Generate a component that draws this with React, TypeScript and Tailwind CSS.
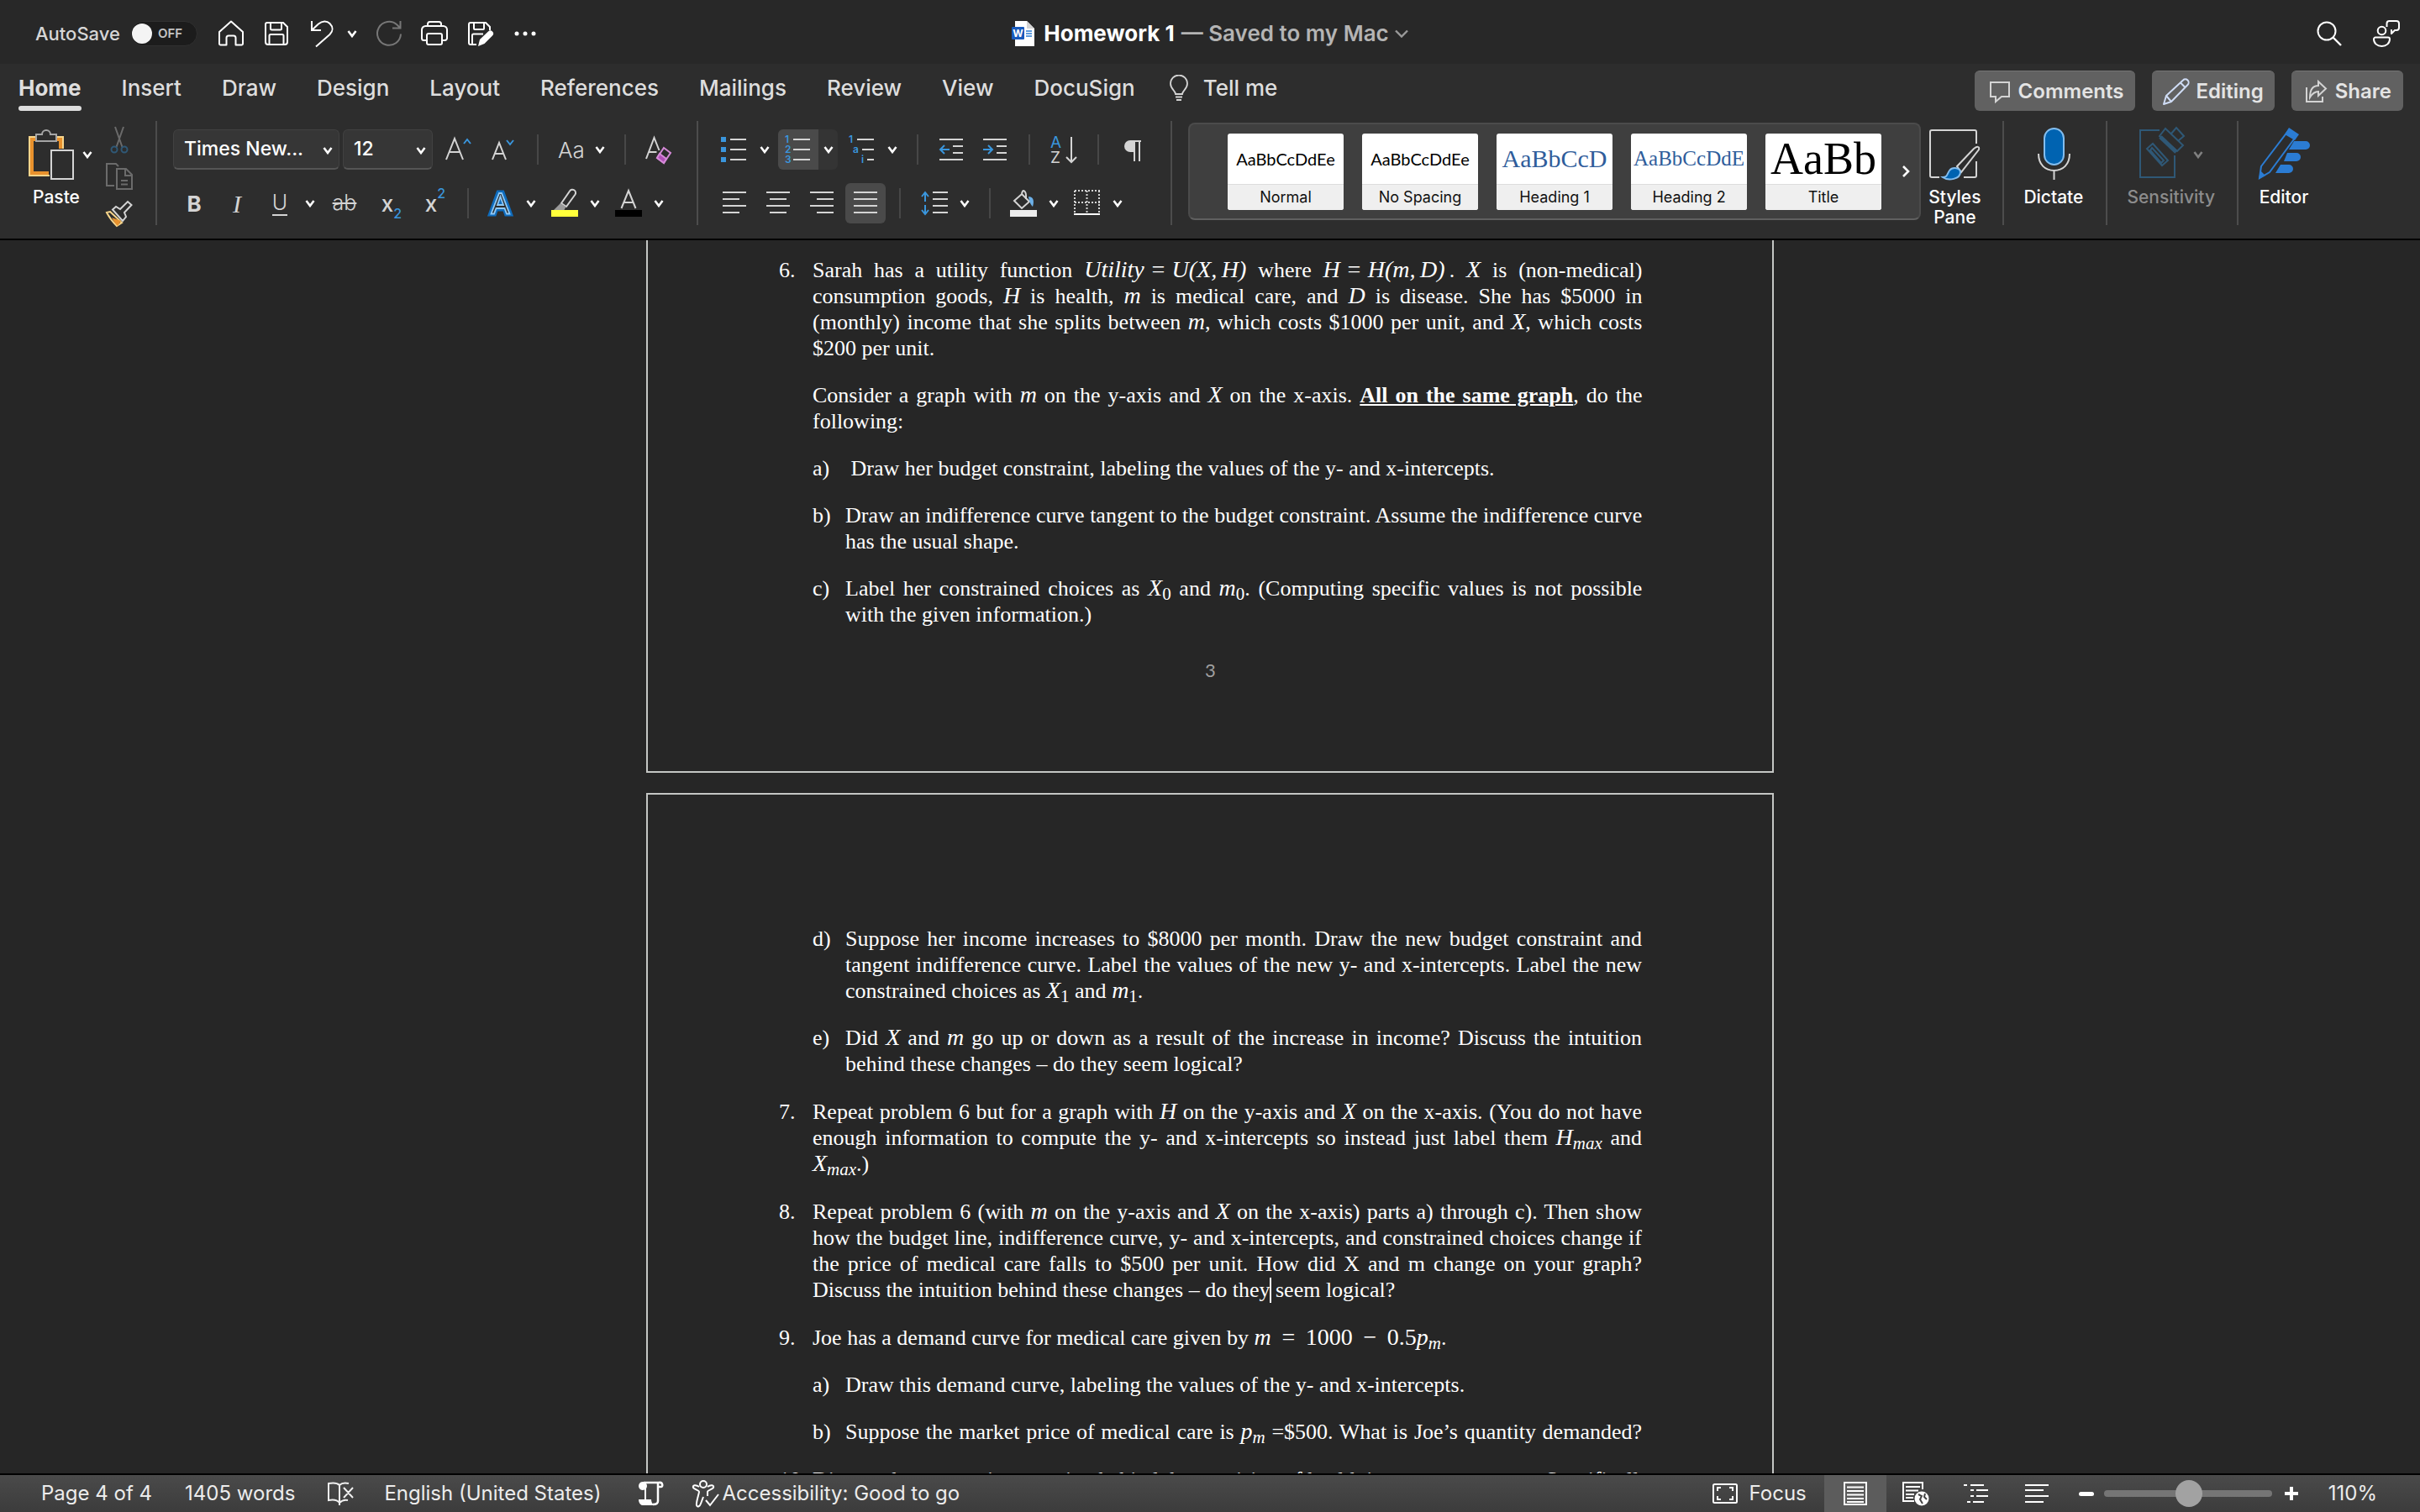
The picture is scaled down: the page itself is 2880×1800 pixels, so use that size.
import type { ReactNode } from "react";
import clsx from "clsx";

const BLUE = "#3a96dd";
const GREY = "#d4d4d4";
const DIM = "#6b6b6b";

function Icon({ children, size = 32, label }: { children: ReactNode; size?: number; label?: string }) {
  return (
    <svg
      width={size}
      height={size}
      viewBox={`0 0 ${size} ${size}`}
      fill="none"
      stroke={GREY}
      strokeWidth="2"
      className="shrink-0 overflow-visible"
      aria-label={label}
    >
      {children}
    </svg>
  );
}

function Chevron({ className = "text-white" }: { className?: string }) {
  return (
    <svg width="12" height="10" viewBox="0 0 12 10" fill="none" className={clsx("shrink-0", className)}>
      <path d="M1.5 2 6 8l4.5-6" stroke="currentColor" strokeWidth="2.6" />
    </svg>
  );
}

function Tool({ label, children, className }: { label: string; children: ReactNode; className?: string }) {
  return (
    <button aria-label={label} className={clsx("flex h-12 w-8 shrink-0 items-center justify-center", className)}>
      {children}
    </button>
  );
}

function Split({ label, children }: { label: string; children: ReactNode }) {
  return (
    <div className="flex shrink-0 items-center gap-[14px]">
      <Tool label={label}>{children}</Tool>
      <button aria-label={`${label} options`}>
        <Chevron />
      </button>
    </div>
  );
}

function Rule({ className = "mx-6" }: { className?: string }) {
  return <div className={clsx("h-9 w-[2px] shrink-0 bg-[#474747]", className)} />;
}

function GroupRule({ className }: { className?: string }) {
  return <div className={clsx("h-[124px] w-[2px] shrink-0 bg-[#4c4c4c]", className)} />;
}

/* ---------- title bar ---------- */

function TitleBar() {
  return (
    <header className="grid h-[76px] shrink-0 grid-cols-[1fr_auto_1fr] items-center bg-[#282828] pt-1">
      <div className="flex items-center pl-[42px]">
        <label className="flex items-center gap-3 text-[22px] font-medium text-[#d6d6d6]">
          AutoSave
          <span className="relative flex h-[30px] w-20 items-center">
            <input
              type="checkbox"
              className="absolute inset-0 appearance-none rounded-full border border-[#303030] bg-[#1c1c1c]"
            />
            <span className="relative ml-[2px] size-6 rounded-full bg-[#f4f4f4]" />
            <span className="relative ml-[7px] text-[15px] font-semibold text-[#c4c4c4]">OFF</span>
          </span>
        </label>
        <div className="ml-6 flex items-center gap-[22px]">
          <button aria-label="Home">
            <Icon>
              <path d="M2 14 16 1.5 30 14v14a1.5 1.5 0 0 1-1.500 1.500H21.500V21a2.500 2.500 0 0 0-2.500-2.500h-6A2.500 2.500 0 0 0 10.500 21v8.500H3.500A1.500 1.500 0 0 1 2 28z" stroke="#fff" strokeLinejoin="round" />
            </Icon>
          </button>
          <button aria-label="Save">
            <Icon>
              <path d="M5 3h19l5 5v18a3 3 0 0 1-3 3H6a3 3 0 0 1-3-3V5a2 2 0 0 1 2-2zM9 3v7a1.500 1.500 0 0 0 1.500 1.500h10A1.500 1.500 0 0 0 22 10V3M7.500 29V18.500A1.500 1.500 0 0 1 9 17h14a1.500 1.500 0 0 1 1.500 1.500V29" stroke="#fff" />
            </Icon>
          </button>
          <div className="flex items-center gap-[14px]">
            <button aria-label="Undo">
              <Icon>
                <path d="M4 1v11h11M4 12 12 4.500C16.500.5 22 .5 25.500 4c4 4 4 9 0 13L9 31.500" stroke="#fff" />
              </Icon>
            </button>
            <button aria-label="Undo options">
              <Chevron />
            </button>
          </div>
          <button aria-label="Redo">
            <Icon>
              <path d="M30 16.500a14 14 0 1 1-4.500-11L29 9M29.500 1v8.500H20" stroke="#777" />
            </Icon>
          </button>
          <button aria-label="Print">
            <Icon>
              <path d="M7 24H3.500A2.500 2.500 0 0 1 1 21.500V11.500A4.500 4.500 0 0 1 5.500 7h21a4.500 4.500 0 0 1 4.500 4.500v10a2.500 2.500 0 0 1-2.500 2.500H25M8 7V4.500A2.500 2.500 0 0 1 10.500 2h11A2.500 2.500 0 0 1 24 4.500V7M9 16h14a2 2 0 0 1 2 2v9a2 2 0 0 1-2 2H9a2 2 0 0 1-2-2v-9a2 2 0 0 1 2-2z" stroke="#fff" />
            </Icon>
          </button>
          <button aria-label="Save as">
            <Icon>
              <path d="M12 29H5a2 2 0 0 1-2-2V5a2 2 0 0 1 2-2h18l5 5v4M9 3v7a1 1 0 0 0 1 1h10a1 1 0 0 0 1-1V3M7 29V18a1.500 1.500 0 0 1 1.500-1.500H20" stroke="#fff" />
              <path d="m14 31 2-8L26 13.500a3.500 3.500 0 0 1 5 5L21.500 28z" fill="#fff" stroke="none" />
            </Icon>
          </button>
          <button aria-label="More">
            <Icon>
              <g fill="#fff" stroke="none">
                <circle cx="6" cy="16" r="2.500" />
                <circle cx="16" cy="16" r="2.500" />
                <circle cx="26" cy="16" r="2.500" />
              </g>
            </Icon>
          </button>
        </div>
      </div>

      <button className="flex items-center text-[26px] leading-8">
        <svg width="28" height="30" viewBox="0 0 28 30" className="mr-[10px]" aria-hidden>
          <path d="M4 0h14l9 9v21H4z" fill="#fff" />
          <path d="M18 0v9h9z" fill="#d3d3d3" />
          <rect x="0" y="7" width="15" height="15" rx="1" fill="#185abd" />
          <path d="M17 12h7M17 15h7M17 18h7" stroke="#2b7cd3" strokeWidth="1.500" />
          <text x="7.500" y="19" fontSize="12" fontWeight="700" fill="#fff" textAnchor="middle">W</text>
        </svg>
        <span className="font-bold text-white">Homework 1</span>
        <span className="ml-2 mr-[7px] font-semibold text-[#b4b4b4]">— Saved to my Mac</span>
        <svg width="16" height="10" viewBox="0 0 16 10" fill="none" aria-hidden>
          <path d="m1 1.500 7 7 7-7" stroke="#9a9a9a" strokeWidth="2.400" />
        </svg>
      </button>

      <div className="flex items-center justify-end gap-9 pr-6">
        <button aria-label="Search">
          <Icon>
            <circle cx="13" cy="13" r="10.500" stroke="#fff" />
            <path d="m20.500 20.500 9.500 9.500" stroke="#fff" strokeWidth="2.400" />
          </Icon>
        </button>
        <button aria-label="Account">
          <Icon>
            <circle cx="10.500" cy="12.500" r="4.800" stroke="#fff" />
            <path d="M3 20.500h15a2 2 0 0 1 2 2c0 5-4 8.500-9.500 8.500S1 27.500 1 22.500a2 2 0 0 1 2-2zM19 1h9a3 3 0 0 1 3 3v5a3 3 0 0 1-3 3h-2l-4 4v-4h-1" stroke="#fff" strokeLinejoin="round" />
            <path d="M16.500 8V4A3 3 0 0 1 19.500 1" stroke="#fff" />
          </Icon>
        </button>
      </div>
    </header>
  );
}

/* ---------- tabs ---------- */

const tabs = ["Home", "Insert", "Draw", "Design", "Layout", "References", "Mailings", "Review", "View", "DocuSign"];

function TabRow() {
  return (
    <div className="flex h-[68px] items-start pl-[22px] pr-5 pt-2">
      <nav className="flex gap-12">
        {tabs.map((t) => (
          <button key={t} className="flex h-12 flex-col justify-between text-[26px]">
            <span className={clsx("leading-[42px] text-[#dedede]", t === "Home" ? "font-bold" : "font-medium")}>{t}</span>
            {t === "Home" ? <span className="h-[6px] w-full rounded-full bg-[#dedede]" /> : null}
          </button>
        ))}
      </nav>
      <button className="ml-10 flex items-center gap-[17px] text-[26px] font-medium leading-[42px] text-[#dedede]">
        <svg width="24" height="32" viewBox="0 0 24 32" fill="none" stroke={GREY} strokeWidth="1.800" aria-hidden>
          <path d="M8 23c0-4-6-6-6-12.500a10 10 0 0 1 20 0C22 17 16 19 16 23zM8 26.500h8M9 30h6" />
        </svg>
        Tell me
      </button>
      <div className="ml-auto flex gap-5 text-[24px] font-semibold text-[#e4e4e4]">
        <button className="flex h-12 items-center gap-[6px] rounded-md border-t border-[#747474] bg-[#616161] px-[14px]">
          <Icon>
            <path d="M5 5h22v17h-9l-7 6v-6H5z" />
          </Icon>
          Comments
        </button>
        <button className="flex h-12 items-center gap-[7px] rounded-md border-t border-[#747474] bg-[#616161] px-[13px]">
          <Icon>
            <path d="m1 31 3-10L24 2.500a3.500 3.500 0 0 1 5.500 5.500L10 28zM4 21l6 7M21 5.500l6 6" stroke="#cfdcf5" strokeLinejoin="round" />
          </Icon>
          Editing
        </button>
        <button className="flex h-12 items-center gap-[6px] rounded-md border-t border-[#747474] bg-[#616161] px-[14px]">
          <Icon>
            <path d="M4 11v17h19v-6M18 4v5C11 9 8 15 8 23c3-5 6-7 10-7v5l9-8.500z" />
          </Icon>
          Share
        </button>
      </div>
    </div>
  );
}

/* ---------- ribbon ---------- */

function Clipboard() {
  return (
    <div className="flex pl-[34px]">
      <div className="flex flex-col pt-[10px]">
        <div className="flex items-center gap-[10px]">
          <svg width="54" height="60" viewBox="0 0 54 60" fill="none" aria-hidden>
            <path d="M9 9H1v46h24M33 9h8v14" stroke="#f7d58b" strokeWidth="2" />
            <path d="M9 12H4v40h20M33 12h5v11" stroke="#e8912d" strokeWidth="4" />
            <path d="M9 14V6h7a5 5 0 0 1 10 0h7v8z" stroke="#a5a5a5" strokeWidth="2" fill="#2d2d2d" />
            <path d="M27 25h26v34H27z" stroke={GREY} strokeWidth="2" fill="#2d2d2d" />
          </svg>
          <button aria-label="Paste options">
            <Chevron />
          </button>
        </div>
        <button className="mt-[9px] w-[66px] text-[21px] font-medium leading-6 text-white">Paste</button>
      </div>
      <div className="ml-4 flex flex-col gap-3 pt-[6px]">
        <button aria-label="Cut">
          <Icon>
            <path d="m11 1 8.500 24M21 1l-8.500 24" stroke={DIM} />
            <circle cx="10" cy="28" r="3.500" stroke="#2f5876" />
            <circle cx="22" cy="28" r="3.500" stroke="#2f5876" />
          </Icon>
        </button>
        <button aria-label="Copy">
          <Icon>
            <path d="M10 27H1V1h11l3 3M13 7h11l7 7v17H13zM23 7v8h8M18 21h8M18 25.500h8" stroke={DIM} />
          </Icon>
        </button>
        <button aria-label="Format painter">
          <Icon>
            <path d="m5 14 14 13-6 4C8 26 4 21 1 15z" fill="#2d2d2d" stroke="#f7d58b" />
            <path d="m7 21 11 4-4 6C11 28 9 25 7 21z" fill="#e8912d" stroke="none" />
            <path d="M8 11.500 12 8l5 3 9-9 4.500 4-8.500 9 2 5-4 5z" fill="#2d2d2d" />
          </Icon>
        </button>
      </div>
    </div>
  );
}

function Picker({ label, value, className }: { label: string; value: string; className: string }) {
  return (
    <div className={clsx("relative h-12 shrink-0", className)}>
      <select
        aria-label={label}
        defaultValue={value}
        className="size-full appearance-none rounded-md border border-b-2 border-[#414141] border-b-[#555] bg-[#363636] pl-3 text-[23px] font-medium text-white"
      >
        <option>{value}</option>
      </select>
      <span className="pointer-events-none absolute right-2 top-5">
        <Chevron />
      </span>
    </div>
  );
}

function FontGroup() {
  return (
    <div className="flex flex-col gap-4 pl-[19px] pt-[10px]">
      <div className="flex items-center">
        <Picker label="Font" value="Times New..." className="w-[198px]" />
        <Picker label="Font size" value="12" className="ml-1 w-[107px]" />
        <Tool label="Grow font" className="ml-[15px]">
          <Icon>
            <path d="M1 28 11 3l10 25M4 19h14" />
            <path d="m22 9 4-5 4 5" stroke={BLUE} />
          </Icon>
        </Tool>
        <Tool label="Shrink font" className="ml-[23px]">
          <Icon>
            <path d="M1 28 9 8l8 20M4 21h10" />
            <path d="m18 5 4 5 4-5" stroke={BLUE} />
          </Icon>
        </Tool>
        <Rule className="mx-[22px]" />
        <div className="flex items-center gap-[11px]">
          <button className="w-[34px] text-[26px] font-light text-[#d4d4d4]">Aa</button>
          <button aria-label="Change case options">
            <Chevron />
          </button>
        </div>
        <Rule className="mx-[23px]" />
        <Tool label="Clear formatting">
          <Icon>
            <path d="M1 27 10.500 2l6 15M4.500 19h9" />
            <path d="M22 14l8 6-8 12-8-6z" stroke="#d58ad8" fill="#2d2d2d" />
            <path d="m17 21 8 6-3 5-8-6z" fill="#b14fb8" stroke="#d58ad8" />
          </Icon>
        </Tool>
      </div>

      <div className="flex items-center text-[26px] text-[#d4d4d4]">
        <div className="ml-[9px] flex gap-[19px]">
          <Tool label="Bold" className="font-bold">B</Tool>
          <Tool label="Italic" className="font-['Liberation_Serif'] text-[30px] italic">I</Tool>
          <Split label="Underline">
            <span className="border-b-2 border-[#d4d4d4] text-[25px] font-light leading-7">U</span>
          </Split>
          <Tool label="Strikethrough" className="text-[25px] font-light line-through">ab</Tool>
        </div>
        <div className="ml-6 flex gap-5">
          <Tool label="Subscript" className="font-medium">
            x<span className="mt-6 text-[16px] text-[#3a96dd]">2</span>
          </Tool>
          <Tool label="Superscript" className="font-medium">
            x<span className="mb-6 text-[16px] text-[#3a96dd]">2</span>
          </Tool>
        </div>
        <Rule className="mx-[22px]" />
        <div className="flex gap-[18px]">
          <Split label="Text effects">
            <Icon>
              <path d="M3.500 29 13 3h5l9.500 26h-5l-2-6h-10l-2 6z" fill="#0f6cbd" stroke="#0f6cbd" strokeWidth="5" />
              <path d="M4.500 28.500 14 4h3l9.500 24.500H23L20.500 22h-10L8 28.500zM12 18h7l-3.500-10z" fill="#2d2d2d" stroke="#8fc8f5" strokeWidth="1.800" />
            </Icon>
          </Split>
          <Split label="Highlight">
            <Icon>
              <path d="M12 16 22 1.500a3.500 3.500 0 0 1 6.500 4L18 20zM12 16l6 4" />
              <path d="M11 16 17.500 20l-2 4H3z" fill="#9a9a9a" stroke="none" />
              <path d="M0 24h32v8H0z" fill="#ffff3b" stroke="none" />
            </Icon>
          </Split>
          <Split label="Font color">
            <Icon>
              <path d="M7.500 22 16 1l8.500 21M10.500 15h11" />
              <path d="M0 24h32v8H0z" fill="#000" stroke="none" />
            </Icon>
          </Split>
        </div>
      </div>
    </div>
  );
}

function ParagraphGroup() {
  return (
    <div className="flex flex-col gap-4 pl-[27px] pt-[10px]">
      <div className="flex items-center">
        <div className="flex gap-[18px]">
          <Split label="Bullets">
            <Icon>
              <path d="M0 1h6v6H0zM0 13h6v6H0zM0 25h6v6H0z" fill={BLUE} stroke="none" />
              <path d="M11 4h19M11 16h19M11 28h19" />
            </Icon>
          </Split>
          <div className="-ml-2 -mr-[5px] flex items-center rounded-md bg-[#343434] pr-[5px]">
            <Tool label="Numbering" className="w-12 rounded-l-md bg-[#4a4a4a]">
              <Icon>
                <g fill={BLUE} stroke="none" fontSize="12" fontWeight="600">
                  <text x="0" y="8">1</text>
                  <text x="0" y="20">2</text>
                  <text x="0" y="32">3</text>
                </g>
                <path d="M10 4h20M10 16h20M10 28h20" />
              </Icon>
            </Tool>
            <button aria-label="Numbering options" className="ml-[6px]">
              <Chevron />
            </button>
          </div>
          <Split label="Multilevel list">
            <Icon>
              <g fill={BLUE} stroke="none" fontSize="12" fontWeight="600">
                <text x="0" y="8">1</text>
                <text x="5" y="20">a</text>
                <text x="15" y="32">i</text>
              </g>
              <path d="M10 4h20M16 16h14M22 28h8" />
            </Icon>
          </Split>
        </div>
        <Rule className="mx-[23px]" />
        <div className="flex gap-5">
          <Tool label="Decrease indent">
            <Icon>
              <path d="M2 4h28M18 12h12M18 20h12M2 28h28" />
              <path d="M14 16H3M8 11l-5 5 5 5" stroke={BLUE} />
            </Icon>
          </Tool>
          <Tool label="Increase indent">
            <Icon>
              <path d="M2 4h28M18 12h12M18 20h12M2 28h28" />
              <path d="M2 16h11M8 11l5 5-5 5" stroke={BLUE} />
            </Icon>
          </Tool>
        </div>
        <Rule />
        <Tool label="Sort">
          <Icon>
            <text x="0" y="14" fontSize="19" fill={BLUE} stroke="none">A</text>
            <text x="0" y="32" fontSize="19" fill={GREY} stroke="none">Z</text>
            <path d="M25 1v30M19 25l6 6 6-6" />
          </Icon>
        </Tool>
        <Rule />
        <Tool label="Show formatting marks">
          <Icon>
            <path d="M26 6H14M18 6v24M24 6v24" />
            <path d="M17 5v14h-4a7 7 0 0 1 0-14z" fill={GREY} stroke="none" />
          </Icon>
        </Tool>
      </div>

      <div className="flex items-center">
        <div className="flex gap-5">
          <Tool label="Align left">
            <Icon>
              <path d="M2 3h28M2 11h20M2 19h28M2 27h20" />
            </Icon>
          </Tool>
          <Tool label="Center">
            <Icon>
              <path d="M2 3h28M6 11h20M2 19h28M6 27h20" />
            </Icon>
          </Tool>
          <Tool label="Align right">
            <Icon>
              <path d="M2 3h28M10 11h20M2 19h28M10 27h20" />
            </Icon>
          </Tool>
          <Tool label="Justify" className="-mx-2 w-12 rounded-md bg-[#4a4a4a]">
            <Icon>
              <path d="M2 3h28M2 11h28M2 19h28M2 27h28" />
            </Icon>
          </Tool>
        </div>
        <Rule />
        <Split label="Line spacing">
          <Icon>
            <path d="M14 3h18M14 11h18M14 19h18M14 27h18" />
            <path d="M5 3v11M1 8l4-5 4 5M5 18v11M1 24l4 5 4-5" stroke={BLUE} />
          </Icon>
        </Split>
        <Rule className="mx-[23px]" />
        <div className="flex gap-[18px]">
          <Split label="Shading">
            <Icon>
              <path d="m14 5 9 9-9 8-9-9zM14 6c0-8 6-6 5 5" />
              <path d="M22 8c6 0 7 5 5 12-2-2-4-5-5-12z" fill="#6cb0e8" stroke="none" />
              <path d="M0 24h32v8H0z" fill="#ededed" stroke="none" />
            </Icon>
          </Split>
          <Split label="Borders">
            <Icon>
              <path d="M1 1h30M1 15h30M1 1v27M15.500 1v27M30 1v27" strokeDasharray="2 2" />
              <path d="M0 29h31" stroke="#fff" strokeWidth="2" />
            </Icon>
          </Split>
        </div>
      </div>
    </div>
  );
}

const styles = [
  { name: "Normal", sample: "AaBbCcDdEe", className: "font-['Lato'] text-[20px] leading-[60px] text-black" },
  { name: "No Spacing", sample: "AaBbCcDdEe", className: "font-['Lato'] text-[20px] leading-[60px] text-black" },
  { name: "Heading 1", sample: "AaBbCcD", className: "font-['Liberation_Serif'] text-[30px] leading-[60px] text-[#2f5d9b]" },
  { name: "Heading 2", sample: "AaBbCcDdE", className: "font-['Liberation_Serif'] text-[25px] leading-[60px] text-[#2f5d9b]" },
  { name: "Title", sample: "AaBb", className: "font-['Liberation_Serif'] text-[54px] leading-[60px] text-black" },
];

function StyleGallery() {
  return (
    <div className="ml-[19px] mt-[2px] flex h-[116px] flex-1 items-center rounded-lg border-2 border-[#4b4b4b] border-b-[#606060] bg-[#3f3f3f] pl-[45px]">
      <div className="flex gap-[22px]">
        {styles.map((s) => (
          <button key={s.name} className="h-[91px] w-[138px] overflow-hidden rounded-[3px] bg-white text-center">
            <span className={clsx("block h-[61px] whitespace-nowrap border-b border-[#dcdcdc]", s.className)}>{s.sample}</span>
            <span className="block h-[30px] bg-[#efefef] text-[18px] leading-[30px] text-[#111]">{s.name}</span>
          </button>
        ))}
      </div>
      <button aria-label="More styles" className="ml-6">
        <svg width="10" height="16" viewBox="0 0 10 16" fill="none" aria-hidden>
          <path d="m2 2 6 6-6 6" stroke="#fff" strokeWidth="2.600" />
        </svg>
      </button>
    </div>
  );
}

function BigButton({ label, icon, className }: { label: string; icon: ReactNode; className?: string }) {
  return (
    <button className={clsx("flex shrink-0 flex-col items-center pt-[10px] text-[21px] font-medium leading-6", className)}>
      <span className="mb-[9px] flex h-[60px] items-center">{icon}</span>
      {label}
    </button>
  );
}

function Ribbon() {
  return (
    <div className="flex h-[140px] items-start">
      <Clipboard />
      <GroupRule className="ml-[27px]" />
      <FontGroup />
      <GroupRule className="ml-[29px]" />
      <ParagraphGroup />
      <GroupRule className="ml-[29px]" />
      <StyleGallery />
      <BigButton
        label="Styles Pane"
        className="ml-2 w-[64px] text-white"
        icon={
          <Icon size={60}>
            <path d="M56 17V3a2 2 0 0 0-2-2H3a2 2 0 0 0-2 2v52a2 2 0 0 0 2 2h9M41 57h13a2 2 0 0 0 2-2V38" />
            <path d="M33 44 53 23c4-3 7-3 6 1L38 51z" fill="#2d2d2d" />
            <path d="M16 57c6 0 5-4 8-8 4-5 13-3 13 2 0 8-14 11-21 6z" fill="#0063b1" stroke="#83bdee" />
          </Icon>
        }
      />
      <GroupRule className="ml-[25px]" />
      <BigButton
        label="Dictate"
        className="ml-[23px] text-white"
        icon={
          <Icon size={60}>
            <rect x="19" y="-1" width="23" height="43" rx="11.500" fill="#0063b1" stroke="#83bdee" />
            <path d="M12 29c0 13 8 20 18.500 20S49 42 49 29M30.500 49v11" />
          </Icon>
        }
      />
      <GroupRule className="ml-[27px]" />
      <BigButton
        label="Sensitivity"
        className="ml-[23px] text-[#8c8c8c]"
        icon={
          <span className="flex items-center gap-[10px]">
            <svg width="54" height="60" viewBox="0 0 54 60" fill="none" stroke="#2f5876" strokeWidth="2" className="overflow-visible" aria-hidden>
              <path d="M24 1H1v56h41V31" />
              <path d="m16 17 18 20-7 6L9 23zM15 22l14 15-3 3-13-15z" />
              <path d="m31-1 21 20-7 7L24 8zM38 5l6-7 9 10-6 5" />
              <path d="m25 9 19 18" strokeWidth="5" />
            </svg>
            <Chevron className="text-[#808080]" />
          </span>
        }
      />
      <GroupRule className="ml-[26px]" />
      <BigButton
        label="Editor"
        className="ml-6 mr-[132px] text-white"
        icon={
          <Icon size={60}>
            <path d="M36 20h20a5 5 0 0 0 0-10H42zM30 34h15a5 5 0 0 0 0-10H34zM20 48h16a5 5 0 0 0 0-10H26z" fill="#2b7cd3" stroke="none" transform="translate(0 4)" />
            <path d="M3 44 35 2l9 7L13 51 1 58z" fill="#2d2d2d" stroke="#2b7cd3" strokeWidth="2" />
            <path d="m36-2 12 8-5 7-12-7zM0 59l2-10 6 6z" fill="#2b7cd3" stroke="none" />
          </Icon>
        }
      />
    </div>
  );
}

/* ---------- document ---------- */

function M({ children }: { children: ReactNode }) {
  return <i className="inline-block text-[28px] leading-none">{children}</i>;
}

function Sub({ children }: { children: ReactNode }) {
  return <sub className="text-[21px]">{children}</sub>;
}

// Every line but the last one is set to the full measure; `full` stretches that one too.
function Para({ lines, full }: { lines: ReactNode[]; full?: boolean }) {
  return (
    <p className="whitespace-nowrap">
      {lines.map((line, i) => (
        <span
          key={i}
          className={clsx("block h-[31px]", (full || i < lines.length - 1) && "[text-align-last:justify]")}
        >
          {line}
        </span>
      ))}
    </p>
  );
}

function Problem({ n, children }: { n: string; children: ReactNode }) {
  return (
    <div className="grid grid-cols-[40px_1fr]">
      <span>{n}</span>
      <div className="flex flex-col gap-[25px]">{children}</div>
    </div>
  );
}

function Part({ n, lines, full }: { n: string; lines: ReactNode[]; full?: boolean }) {
  return (
    <div className="grid grid-cols-[39px_1fr]">
      <span>{n}</span>
      <Para lines={lines} full={full} />
    </div>
  );
}

function Document() {
  return (
    <main className="min-h-0 flex-1 overflow-hidden border-t-2 border-black bg-[#262626] font-['Liberation_Serif',serif] text-[26px] leading-[31px] text-white">
      <section className="mx-auto w-[1342px] border-2 border-t-0 border-[#c4c6c4] pb-[105px] pl-[156px] pr-[155px] pt-5">
        <Problem n="6.">
          <Para
            lines={[
              <>Sarah has a utility function <M>Utility&nbsp;=&nbsp;U(X,&thinsp;H)</M> where <M>H&nbsp;=&nbsp;H(m,&thinsp;D)</M>&thinsp;. <M>X</M> is (non-medical)</>,
              <>consumption goods, <M>H</M> is health, <M>m</M> is medical care, and <M>D</M> is disease. She has $5000 in</>,
              <>(monthly) income that she splits between <M>m</M>, which costs $1000 per unit, and <M>X</M>, which costs</>,
              "$200 per unit.",
            ]}
          />
          <Para
            lines={[
              <>Consider a graph with <M>m</M> on the y-axis and <M>X</M> on the x-axis. <b className="underline decoration-2 underline-offset-2">All on the same graph</b>, do the</>,
              "following:",
            ]}
          />
          <Part n="a)" lines={[<>&nbsp;Draw her budget constraint, labeling the values of the y- and x-intercepts.</>]} />
          <Part
            n="b)"
            lines={["Draw an indifference curve tangent to the budget constraint. Assume the indifference curve", "has the usual shape."]}
          />
          <Part
            n="c)"
            lines={[
              <>Label her constrained choices as <M>X</M><Sub>0</Sub> and <M>m</M><Sub>0</Sub>. (Computing specific values is not possible</>,
              "with the given information.)",
            ]}
          />
        </Problem>
        <div className="mt-[35px] text-center font-['Lato'] text-[22px] text-[#a0a0a0]">3</div>
      </section>

      <section className="mx-auto mt-6 flex w-[1342px] flex-col gap-[26px] border-2 border-[#c4c6c4] pb-[156px] pl-[156px] pr-[155px] pt-[156px]">
        <Problem n="">
          <Part
            n="d)"
            lines={[
              "Suppose her income increases to $8000 per month. Draw the new budget constraint and",
              "tangent indifference curve. Label the values of the new y- and x-intercepts. Label the new",
              <>constrained choices as <M>X</M><Sub>1</Sub> and <M>m</M><Sub>1</Sub>.</>,
            ]}
          />
          <Part
            n="e)"
            lines={[
              <>Did <M>X</M> and <M>m</M> go up or down as a result of the increase in income? Discuss the intuition</>,
              "behind these changes – do they seem logical?",
            ]}
          />
        </Problem>
        <Problem n="7.">
          <Para
            lines={[
              <>Repeat problem 6 but for a graph with <M>H</M> on the y-axis and <M>X</M> on the x-axis. (You do not have</>,
              <>enough information to compute the y- and x-intercepts so instead just label them <M>H<Sub>max</Sub></M> and</>,
              <><M>X<Sub>max</Sub></M>.)</>,
            ]}
          />
        </Problem>
        <Problem n="8.">
          <Para
            lines={[
              <>Repeat problem 6 (with <M>m</M> on the y-axis and <M>X</M> on the x-axis) parts a) through c). Then show</>,
              "how the budget line, indifference curve, y- and x-intercepts, and constrained choices change if",
              "the price of medical care falls to $500 per unit. How did X and m change on your graph?",
              <>
                Discuss the intuition behind these changes – do they
                <span className="relative">
                  <span className="absolute left-0 top-0 h-[30px] w-[2px] bg-white" />
                </span>{" "}
                seem logical?
              </>,
            ]}
          />
        </Problem>
        <Problem n="9.">
          <Para
            lines={[
              <>
                Joe has a demand curve for medical care given by <M>m</M>
                <span className="text-[28px] leading-none">&thinsp; =&thinsp; 1000&thinsp; −&thinsp; 0.5</span>
                <M>p<Sub>m</Sub></M>.
              </>,
            ]}
          />
          <Part n="a)" lines={["Draw this demand curve, labeling the values of the y- and x-intercepts."]} />
          <Part
            n="b)"
            full
            lines={[<>Suppose the market price of medical care is <M>p<Sub>m</Sub></M> =$500. What is Joe’s quantity demanded?</>]}
          />
        </Problem>
        <Problem n="10.">
          <Para full lines={["Discuss the economic reasoning behind the provision of health insurance coverage. Specifically,"]} />
        </Problem>
      </section>
    </main>
  );
}

/* ---------- status bar ---------- */

function StatusBar() {
  return (
    <footer className="flex h-[46px] shrink-0 items-center border-t-2 border-black bg-linear-to-b from-[#4a4a4a] to-[#3c3c3c] text-[24px] text-[#ececec]">
      <button className="ml-[49px]">Page 4 of 4</button>
      <button className="ml-[39px]">1405 words</button>
      <button className="ml-[38px]" aria-label="Proofing">
        <Icon>
          <path d="M15 6c-3-3-8-3-13-2v20c5-1 10-1 13 3M15 6c3-3 7-3 11-2M15 6v24M15 27c3-3 6-4 10-3M20 9l11 12M31 9 20 21" stroke="#f0f0f0" />
        </Icon>
      </button>
      <button className="ml-9">English (United States)</button>
      <button className="ml-11" aria-label="Track changes">
        <Icon>
          <path d="M7 3h18M25 3c5-1 5 5 3 5h-4M24 3v22c0 4-4 4-6 4" stroke="#fff" strokeWidth="2.500" />
          <path d="M9 8v16" stroke="#fff" />
          <circle cx="6" cy="7" r="5" fill="#fff" stroke="none" />
          <path d="M1 23h15c0 3 1 5 4 7H6c-3 0-5-3-5-7z" fill="#fff" stroke="none" />
        </Icon>
      </button>
      <button className="ml-8 flex items-center gap-1">
        <Icon>
          <circle cx="14" cy="5" r="4" stroke="#fff" />
          <path d="M9 8C5 5 1 6 2 9c1 2 7 3 7 5s-4 13-3 16 4 1 5-2l3-8M19 8c4-3 8-2 7 1-1 2-7 3-7 5v5M17 24l5 6 10-13" stroke="#fff" />
        </Icon>
        Accessibility: Good to go
      </button>

      <button className="ml-auto flex items-center gap-[13px]">
        <Icon>
          <rect x="2" y="5" width="28" height="22" rx="1.500" stroke="#fff" />
          <path d="M7 13v-4h4M21 9h4v4M25 19v4h-4M11 23H7v-4" stroke="#fff" />
        </Icon>
        Focus
      </button>
      <button aria-label="Print layout" className="ml-[21px] flex h-11 w-[74px] items-center justify-center bg-[#5c5c5c]">
        <Icon>
          <path d="M3 3h26v26H3zM6 8.500h20M6 13h20M6 17.500h20M6 22h20M6 26h20" stroke="#fff" />
        </Icon>
      </button>
      <button aria-label="Web layout" className="ml-[19px]">
        <Icon>
          <path d="M14 25H1V3h23v8M4 8h17M4 12.500h15M4 17h10M4 21h9" stroke="#fff" />
          <circle cx="23" cy="22" r="8.500" fill="#fff" stroke="none" />
          <path d="m19 17 4 2-2 4 3 5M27 16l-1 4 3 3" stroke="#444" />
        </Icon>
      </button>
      <button aria-label="Outline" className="ml-10">
        <Icon>
          <path d="M1 6h4M9 6h16M9 12h4M16 12h14M9 19h4M16 19h14M5 26h4M12 26h13" stroke="#fff" />
        </Icon>
      </button>
      <button aria-label="Draft" className="ml-10">
        <Icon>
          <path d="M2 6h28M2 12h22M2 19h28M2 26h22" stroke="#fff" />
        </Icon>
      </button>
      <button aria-label="Zoom out" className="ml-[34px] flex h-8 w-[18px] items-center">
        <span className="h-[5px] w-full rounded-sm bg-white" />
      </button>
      <input
        type="range"
        aria-label="Zoom"
        min={0}
        max={100}
        defaultValue={51}
        className="ml-3 h-2 w-[200px] appearance-none rounded-full bg-[#757575] [&::-webkit-slider-thumb]:size-8 [&::-webkit-slider-thumb]:appearance-none [&::-webkit-slider-thumb]:rounded-full [&::-webkit-slider-thumb]:bg-[#a2a2a2]"
      />
      <button aria-label="Zoom in" className="ml-[14px]">
        <svg width="18" height="18" viewBox="0 0 18 18" aria-hidden>
          <path d="M9 1v16M1 9h16" stroke="#fff" strokeWidth="4" />
        </svg>
      </button>
      <button className="ml-[35px] mr-[51px]">110%</button>
    </footer>
  );
}

export default function App() {
  return (
    <div className="flex h-screen flex-col overflow-hidden bg-[#262626] font-['Inter',sans-serif]">
      <TitleBar />
      <div className="shrink-0 bg-[#2d2d2d]">
        <TabRow />
        <Ribbon />
      </div>
      <Document />
      <StatusBar />
    </div>
  );
}
